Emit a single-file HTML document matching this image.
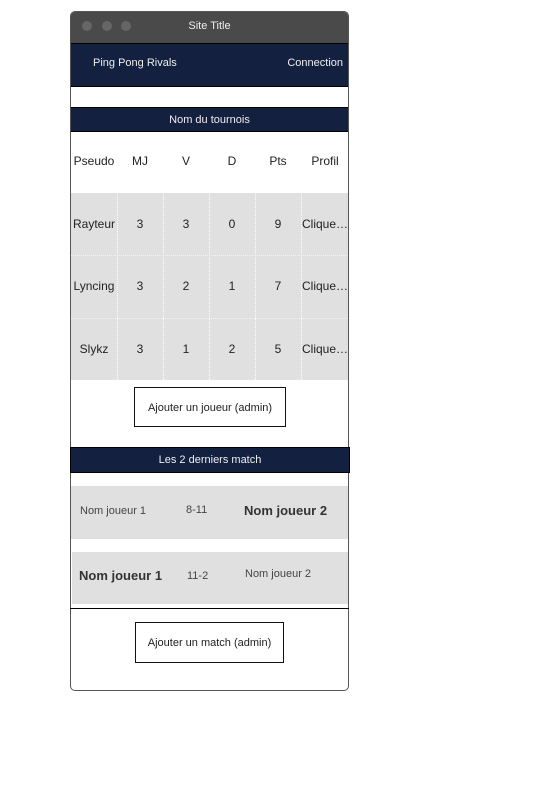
<!DOCTYPE html>
<html><head><meta charset="utf-8"><style>
*{margin:0;padding:0;box-sizing:border-box}
body{width:552px;height:801px;background:#fff;position:relative;font-family:"Liberation Sans",sans-serif;font-size:12px;color:#222;overflow:hidden}
.a{position:absolute}
.win{left:70px;top:11px;width:279px;height:680px;border:1px solid #555;border-radius:5px;overflow:hidden;background:#fff}
.tb{left:0;top:0;width:277px;height:31px;background:#4a4a4a;color:#eee;text-align:center;line-height:29px;font-size:11px}
.dot{width:10px;height:10px;border-radius:5px;background:#666;top:9px}
.navy{background:#13203f;color:#eee}
.c{text-align:center}
.cell{position:absolute;text-align:center;font-size:12px;color:#222}
.btn{border:1px solid #111;background:#fff;text-align:center;font-size:11px}
</style></head><body>
<div class="a win">
 <div class="a tb">Site Title
  <div class="a dot" style="left:11px"></div><div class="a dot" style="left:31px"></div><div class="a dot" style="left:50px"></div>
 </div>
 <div class="a navy" style="left:0;top:31px;width:277px;height:44px;border-top:1px solid #000;border-bottom:1px solid #000;font-size:11px">
  <span class="a" style="left:22px;top:13px">Ping Pong Rivals</span>
  <span class="a" style="right:5px;top:13px">Connection</span>
 </div>
 <div class="a navy c" style="left:0;top:95px;width:277px;height:25px;border-top:1px solid #000;border-bottom:1px solid #000;line-height:25px;font-size:11px">Nom du tournois</div>
</div>
<div class="a" style="left:71px;top:193px;width:277px;height:187px;background:#e0e0e0"></div>
<div class="a" style="left:117px;top:193px;height:187px;border-left:1px dotted #fff"></div>
<div class="a" style="left:163px;top:193px;height:187px;border-left:1px dotted #fff"></div>
<div class="a" style="left:209px;top:193px;height:187px;border-left:1px dotted #fff"></div>
<div class="a" style="left:255px;top:193px;height:187px;border-left:1px dotted #fff"></div>
<div class="a" style="left:301px;top:193px;height:187px;border-left:1px dotted #fff"></div>
<div class="a" style="left:71px;top:255px;width:277px;border-top:1px dotted #f4f4f4"></div>
<div class="a" style="left:71px;top:318px;width:277px;border-top:1px dotted #f4f4f4"></div>
<div id="t"></div>
<script>
var rows=[[162,"Pseudo","MJ","V","D","Pts","Profil"],[225,"Rayteur","3","3","0","9","Clique…"],[287,"Lyncing","3","2","1","7","Clique…"],[350,"Slykz","3","1","2","5","Clique…"]];
var xs=[71,117,163,209,255,301],h="";
rows.forEach(function(r){for(var i=0;i<6;i++){h+='<div class="cell" style="left:'+xs[i]+'px;width:'+(i==5?48:46)+'px;top:'+(r[0]-8)+'px;'+(i==5&&r[1]!="Pseudo"?'text-align:left;padding-left:1px;':'')+'">'+r[i+1]+'</div>'}});
document.getElementById('t').innerHTML=h;
</script>
<div class="a btn" style="left:134px;top:387px;width:152px;height:40px;line-height:40px">Ajouter un joueur (admin)</div>
<div class="a navy c" style="left:70px;top:447px;width:280px;height:26px;border:1px solid #000;line-height:24px;font-size:11px">Les 2 derniers match</div>
<div class="a" style="left:71px;top:486px;width:277px;height:53px;background:#e0e0e0"></div>
<div class="a" style="left:72px;top:552px;width:276px;height:52px;background:#e0e0e0"></div>
<div class="a" style="left:80px;top:505px;font-size:11px;color:#444">Nom joueur 1</div>
<div class="a" style="left:186px;top:504px;font-size:11px;color:#444">8-11</div>
<div class="a" style="left:244px;top:503px;font-size:13px;font-weight:bold;color:#333">Nom joueur 2</div>
<div class="a" style="left:79px;top:568px;font-size:13px;font-weight:bold;color:#333">Nom joueur 1</div>
<div class="a" style="left:187px;top:570px;font-size:11px;color:#444">11-2</div>
<div class="a" style="left:245px;top:568px;font-size:11px;color:#444">Nom joueur 2</div>
<div class="a" style="left:70px;top:608px;width:279px;border-top:1px solid #000"></div>
<div class="a btn" style="left:135px;top:622px;width:149px;height:41px;line-height:41px">Ajouter un match (admin)</div>
</body></html>
